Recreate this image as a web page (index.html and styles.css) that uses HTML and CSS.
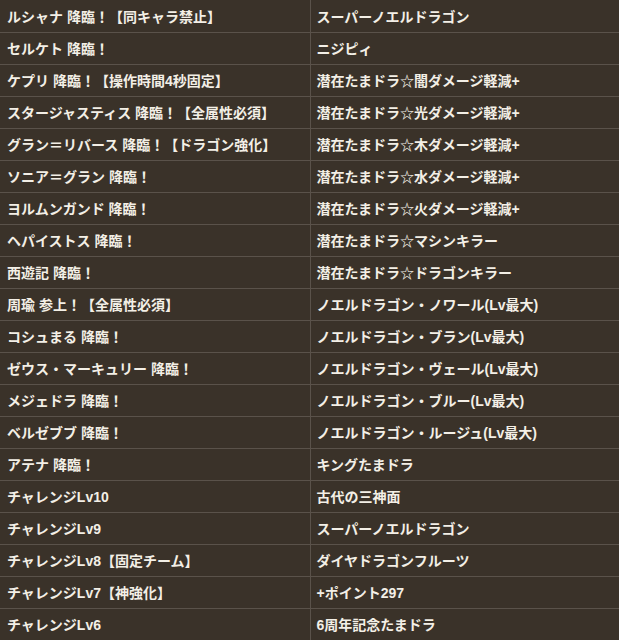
FILE: index.html
```html
<!DOCTYPE html>
<html lang="ja">
<head>
    <meta charset="UTF-8">
    <meta name="viewport" content="width=device-width, initial-scale=1.0">
    <title>降臨ダンジョン一覧</title>
    <link rel="stylesheet" href="styles.css">
</head>
<body>
    <table class="dungeon-table">
        <tbody>
            <tr><td>ルシャナ 降臨！【同キャラ禁止】</td><td>スーパーノエルドラゴン</td></tr>
            <tr><td>セルケト 降臨！</td><td>ニジピィ</td></tr>
            <tr><td>ケプリ 降臨！【操作時間4秒固定】</td><td>潜在たまドラ☆闇ダメージ軽減+</td></tr>
            <tr><td>スタージャスティス 降臨！【全属性必須】</td><td>潜在たまドラ☆光ダメージ軽減+</td></tr>
            <tr><td>グラン＝リバース 降臨！【ドラゴン強化】</td><td>潜在たまドラ☆木ダメージ軽減+</td></tr>
            <tr><td>ソニア＝グラン 降臨！</td><td>潜在たまドラ☆水ダメージ軽減+</td></tr>
            <tr><td>ヨルムンガンド 降臨！</td><td>潜在たまドラ☆火ダメージ軽減+</td></tr>
            <tr><td>ヘパイストス 降臨！</td><td>潜在たまドラ☆マシンキラー</td></tr>
            <tr><td>西遊記 降臨！</td><td>潜在たまドラ☆ドラゴンキラー</td></tr>
            <tr><td>周瑜 参上！【全属性必須】</td><td>ノエルドラゴン・ノワール(Lv最大)</td></tr>
            <tr><td>コシュまる 降臨！</td><td>ノエルドラゴン・ブラン(Lv最大)</td></tr>
            <tr><td>ゼウス・マーキュリー 降臨！</td><td>ノエルドラゴン・ヴェール(Lv最大)</td></tr>
            <tr><td>メジェドラ 降臨！</td><td>ノエルドラゴン・ブルー(Lv最大)</td></tr>
            <tr><td>ベルゼブブ 降臨！</td><td>ノエルドラゴン・ルージュ(Lv最大)</td></tr>
            <tr><td>アテナ 降臨！</td><td>キングたまドラ</td></tr>
            <tr><td>チャレンジLv10</td><td>古代の三神面</td></tr>
            <tr><td>チャレンジLv9</td><td>スーパーノエルドラゴン</td></tr>
            <tr><td>チャレンジLv8【固定チーム】</td><td>ダイヤドラゴンフルーツ</td></tr>
            <tr><td>チャレンジLv7【神強化】</td><td>+ポイント297</td></tr>
            <tr><td>チャレンジLv6</td><td>6周年記念たまドラ</td></tr>
        </tbody>
    </table>
</body>
</html>
```

FILE: styles.css
```css
body {
    margin: 0;
    padding: 0;
    background-color: #3a3229;
    font-family: "Liberation Sans", "Noto Sans CJK JP", sans-serif;
}

.dungeon-table {
    width: 619px;
    border-collapse: collapse;
    table-layout: fixed;
}

.dungeon-table tr {
    height: 32px;
}

.dungeon-table td {
    padding: 0 6px;
    border-bottom: 1px solid #5a524a;
    color: #f3efe6;
    font-size: 14px;
    font-weight: bold;
    vertical-align: middle;
    white-space: nowrap;
    box-sizing: border-box;
}

.dungeon-table td:first-child {
    width: 310px;
    padding-left: 7px;
    border-right: 1px solid #5a524a;
}
```
